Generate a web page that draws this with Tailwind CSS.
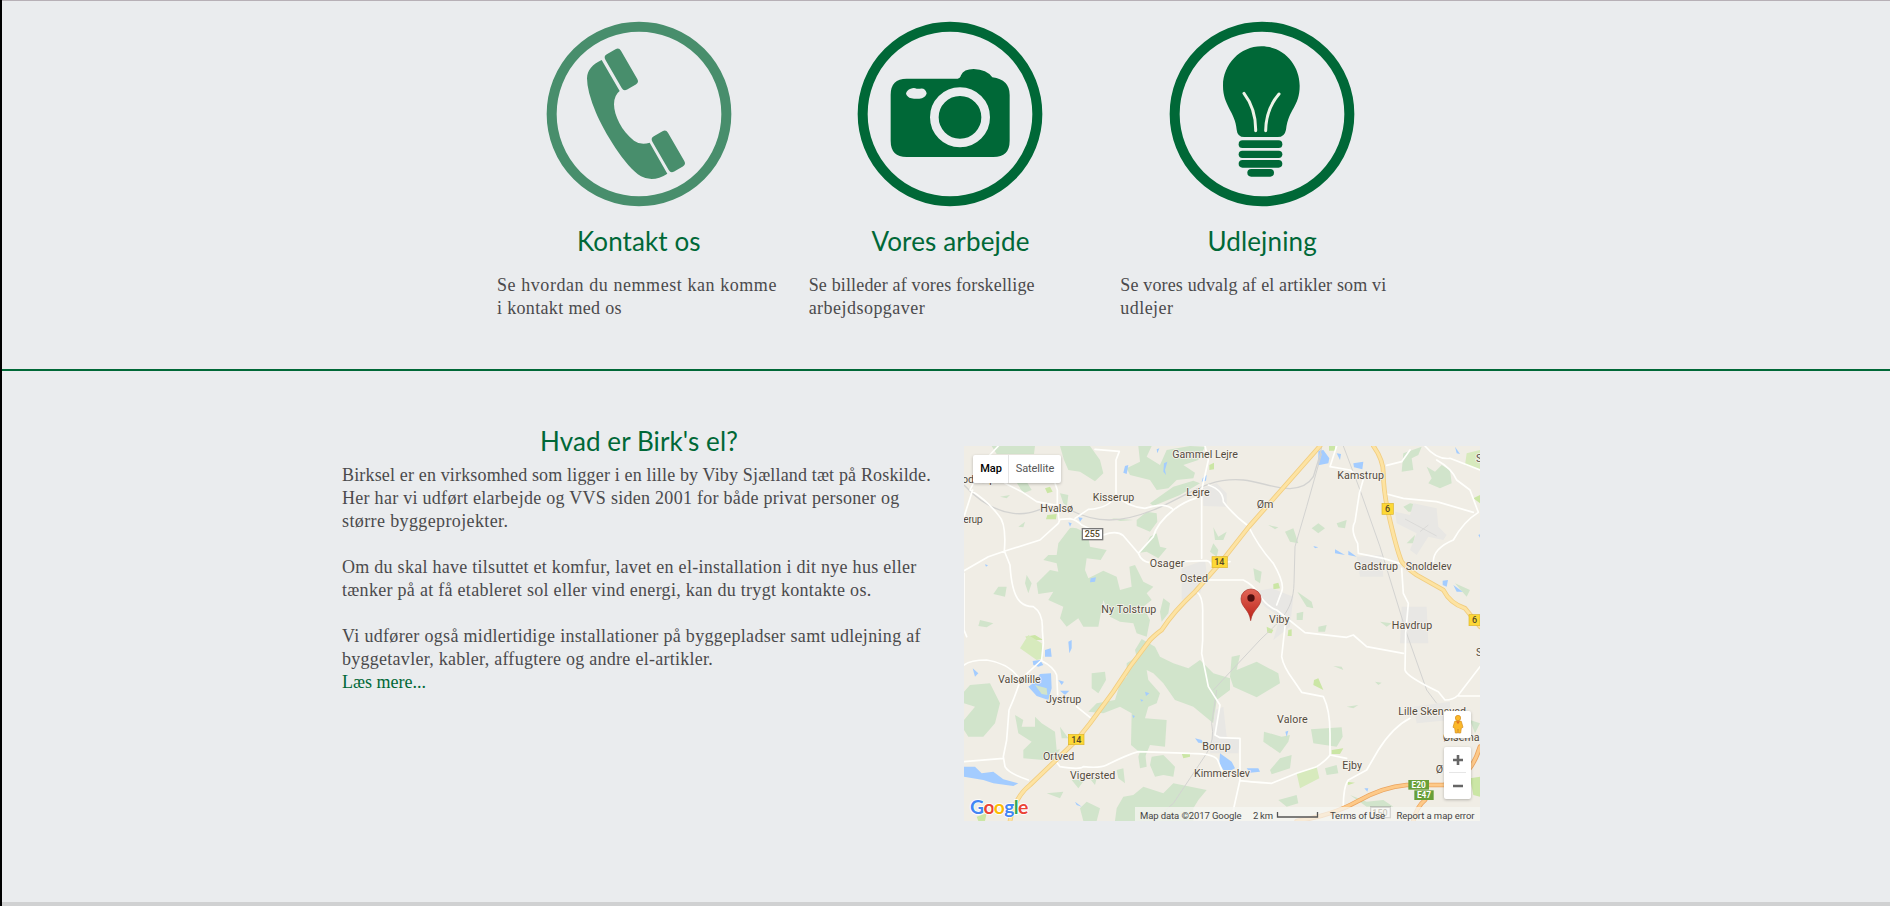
<!DOCTYPE html>
<html lang="da">
<head>
<meta charset="utf-8">
<title>Birk's el</title>
<script src="https://cdn.jsdelivr.net/npm/@tailwindcss/browser@4"></script>
</head>
<body class="h-[906px] overflow-hidden bg-[#eaecee]">
<div class="flex h-[906px] flex-col border-l-2 border-black">
  <section class="h-[371px] shrink-0 border-t border-b-2 border-t-[#b7b0b6] border-b-[#006837]">
    <div class="ml-[481px] grid w-[935px] grid-cols-3 pt-5 font-['Liberation_Serif',serif] text-[18px] leading-[23px] whitespace-nowrap text-[#4a4a4c]">
      <div class="px-[14px]">
        <svg class="mx-auto block" width="186" height="186" viewBox="198 63 558 558" fill="#488e6c">
          <circle cx="477" cy="342" r="262" fill="none" stroke="#488e6c" stroke-width="30"/>
          <path d="M365 180L419 273Q402 286 402 313C402 345 425 395 462 422Q483 437 509 428L562 521Q520 549 483 529C435 499 372 395 348 338Q321 275 321 235C322 210 337 193 365 180Z"/>
          <rect x="-27" y="-61" width="54" height="122" rx="12" transform="translate(424 208) rotate(-30)"/>
          <rect x="-27" y="-61" width="54" height="122" rx="12" transform="translate(565 454) rotate(-30)"/>
        </svg>
        <h2 class="mt-4 text-center font-[Lato,sans-serif] text-[26px] leading-[36px] tracking-[0.1px] text-[#006837]">Kontakt os</h2>
        <p class="mt-[15px]"><span class="tracking-[0.565px]">Se hvordan du nemmest kan komme</span><br><span class="tracking-[0.34px]">i kontakt med os</span></p>
      </div>
      <div class="px-[14px]">
        <svg class="mx-auto block" width="186" height="186" viewBox="171 63 558 558" fill="#006837">
          <circle cx="450" cy="342" r="262" fill="none" stroke="#006837" stroke-width="30"/>
          <path d="M320 236H473Q480 236 483 226Q491 207 521 207Q560 208 577 232Q629 239 629 285V422Q629 471 580 471H320Q272 471 272 422V284Q272 236 320 236Z"/>
          <path d="M318 281Q320 270 332 266Q342 262 350 266H360Q376 263 380 280Q378 290 366 295Q350 298 334 295Q321 291 318 281Z" fill="#eaecee"/>
          <circle cx="480" cy="352" r="77" stroke="#eaecee" stroke-width="26"/>
        </svg>
        <h2 class="mt-4 text-center font-[Lato,sans-serif] text-[26px] leading-[36px] tracking-[0.15px] text-[#006837]">Vores arbejde</h2>
        <p class="mt-[15px]"><span class="tracking-[0.16px]">Se billeder af vores forskellige</span><br><span class="tracking-[0.47px]">arbejdsopgaver</span></p>
      </div>
      <div class="px-[14px]">
        <svg class="mx-auto block" width="186" height="186" viewBox="206 63 558 558" fill="#006837">
          <circle cx="485" cy="342" r="262" fill="none" stroke="#006837" stroke-width="30"/>
          <path d="M483 139C550 139 598 195 598 257C598 320 565 325 557 389Q553 411 532 411H432Q411 411 409 389C405 335 368 318 368 257C368 193 420 139 483 139Z"/>
          <path d="M431 280Q467 327 466 392M536 282Q497 327 496 392" fill="none" stroke="#eef3e8" stroke-width="9" stroke-linecap="round"/>
          <rect x="415" y="421" width="131" height="23" rx="11.500"/><rect x="415" y="452" width="131" height="22" rx="11"/><rect x="415" y="480" width="131" height="23" rx="11.500"/><rect x="441" y="507" width="80" height="23" rx="11.500"/>
        </svg>
        <h2 class="mt-4 text-center font-[Lato,sans-serif] text-[26px] leading-[36px] tracking-[0.15px] text-[#006837]">Udlejning</h2>
        <p class="mt-[15px]"><span class="tracking-[0.15px]">Se vores udvalg af el artikler som vi</span><br><span class="tracking-[0.44px]">udlejer</span></p>
      </div>
    </div>
  </section>
  <section class="flex h-[531px] shrink-0">
    <div class="ml-[340px] w-[594px] pt-[52px] font-['Liberation_Serif',serif] text-[18px] leading-[23px] whitespace-nowrap text-[#4a4a4c]">
      <h2 class="text-center font-[Lato,sans-serif] text-[26px] leading-[36px] tracking-[0.1px] text-[#006837]">Hvad er Birk's el?</h2>
      <p class="mt-[5px]"><span class="tracking-[0.16px]">Birksel er en virksomhed som ligger i en lille by Viby Sjælland tæt på Roskilde.</span><br><span class="tracking-[0.28px]">Her har vi udført elarbejde og VVS siden 2001 for både privat personer og</span><br><span class="tracking-[0.38px]">større byggeprojekter.</span></p>
      <p class="mt-[23px]"><span class="tracking-[0.27px]">Om du skal have tilsuttet et komfur, lavet en el-installation i dit nye hus eller</span><br><span class="tracking-[0.29px]">tænker på at få etableret sol eller vind energi, kan du trygt kontakte os.</span></p>
      <p class="mt-[23px]"><span class="tracking-[0.32px]">Vi udfører også midlertidige installationer på byggepladser samt udlejning af</span><br><span class="tracking-[0.27px]">byggetavler, kabler, affugtere og andre el-artikler.</span><br><a class="text-[#006837]">Læs mere...</a></p>
    </div>
    <div class="relative mt-[75px] ml-[28px] h-[375px] w-[516px] overflow-hidden font-[Roboto,sans-serif]">
      <svg class="block" width="516" height="375" viewBox="12 18 1548 1125">
        <rect x="12" y="18" width="1548" height="1125" fill="#f0ede5"/>
        <!-- forest -->
        <g fill="#d1e4cb">
          <path d="M95 18H225L222 42H110ZM300 18H390L420 60 430 100 405 124 360 95 325 90 312 60ZM535 18L575 18 560 50 600 75 620 30 690 18 735 20 715 60 670 75 705 98 700 115 650 120 625 145 590 150 570 120 510 105 500 85 540 65ZM640 140L700 122 720 130 660 165 580 198 570 190Z"/>
          <path d="M330 264Q355 258 385 290L390 320 440 330 422 360 380 355 375 390 385 415 430 392 470 410 480 450 515 440 508 380 525 375 550 425 580 440 560 460 575 480 550 500 570 540 560 590 530 580 520 550 480 545 450 530 430 480 415 560 370 560 355 535 320 560 300 535 310 500 265 480 280 455 235 462 230 430 270 390 295 395 290 370 250 360 265 345 290 345 295 310Z"/>
          <path d="M530 240L560 215 590 220 592 245 570 275 530 258ZM570 290L590 280 600 320 620 325 595 355 560 335 540 338 560 310ZM610 475L630 490 625 520 605 545 600 515ZM760 262L775 290 800 275 790 300 765 300ZM760 310L775 330 770 350 750 335ZM200 405L215 430 205 460 195 430ZM115 440L140 440 135 470 100 462ZM60 540L100 550 80 562 55 558ZM185 132L200 145 195 155 180 145Z"/>
          <path d="M545 597L585 620 600 650 640 670 685 685 720 660 760 700 810 715 810 750 770 780 760 850 700 800 645 780 610 730 580 700 560 690 565 720 600 760 590 790 565 800 555 835 620 840 615 920 570 915 555 950 513 915 515 820 480 800 430 820 385 815 410 790 465 780 480 730 500 710 500 670 530 650 525 630ZM395 700L435 695 438 720 415 760 395 745Z"/>
          <path d="M30 735L90 730 120 790 105 850 70 890 25 890 12 870 12 840 45 800 12 790 12 755ZM165 825L190 840 185 860 225 860 225 830 245 850 285 875 290 930 250 960 190 955 190 930 215 905 175 880ZM300 860L325 895 305 895ZM265 935L300 928 280 960ZM335 1020L375 1018 355 1045ZM385 1010L410 1015 405 1035ZM470 990L490 985 495 1030 475 1015ZM540 935L555 932 560 980 540 985 535 950ZM575 950L610 945 645 980 640 1010 610 1005 585 1010 570 975Z"/>
          <path d="M550 1040L610 1060 640 1030 740 1050 715 1080 700 1105 700 1143 465 1143 470 1105 490 1070 520 1065ZM360 1105L380 1085 420 1105 410 1143H370ZM260 1060L310 1055 300 1075Z"/>
          <path d="M815 650L840 645 830 690 890 665 955 700 960 730 935 745 890 772 820 740 810 710ZM912 875L965 890 990 885 985 905 960 940 910 905ZM960 955L995 945 990 985 935 1003 930 990ZM1053 868L1145 862 1148 890 1130 920 1060 910ZM1095 985L1130 975 1135 1000 1100 1005ZM955 1080L1010 1065 1015 1090 980 1100ZM1170 1065L1220 1085 1270 1080 1300 1100 1220 1100Z"/>
          <path d="M1330 40L1385 20 1375 45 1355 55 1360 90 1325 95ZM1400 80L1425 95 1445 75 1470 90 1475 130 1440 145 1405 130 1415 115ZM1330 200L1350 190 1375 195 1375 215 1345 215ZM1340 310L1365 285 1360 310ZM975 275L1000 265 1015 310 990 305ZM1055 265L1075 250 1095 265 1075 280ZM1130 250L1160 240 1155 265 1135 262ZM925 255L955 262 945 268ZM1012 455L1055 485 1060 505 1040 500ZM1010 520L1030 515 1028 540 1010 540ZM1075 560L1100 555 1095 575 1075 575ZM880 385L905 395 900 430 885 420ZM1260 545L1295 550 1280 560ZM1485 430L1530 450 1520 470Z"/>
          <path d="M120 170L150 165 140 175ZM175 260L195 245 190 262ZM455 235L520 240 480 243ZM165 120L200 125 215 150 190 160ZM300 160L325 165 320 205 345 215 310 190ZM1530 840L1560 850 1545 880ZM1120 678L1145 680 1150 690ZM1160 800L1195 795 1180 805ZM1245 725L1265 728 1255 735Z"/>
        </g>
        <g fill="#cbe6a5">
          <path d="M255 145L270 140 278 155 262 160ZM262 225L290 222 288 238 258 238ZM748 75L762 68 762 88 748 90ZM195 590L225 585 250 600H210ZM1107 18H1125V32H1107ZM940 432L955 428 960 445 940 448ZM940 480L955 470 985 500 960 495 945 500ZM1540 175L1560 165V190ZM985 570L995 568 995 588 983 588ZM920 560L940 570 935 580 922 578ZM1062 720L1075 715 1090 750 1060 735ZM665 940H690V950L670 955ZM1115 930L1150 925 1140 942 1115 942ZM50 1130L80 1120 75 1143H55ZM1160 1025L1185 1028 1165 1035ZM1530 1015L1560 1010V1070L1540 1065Z"/>
          <path d="M205 585L245 610 250 655 230 660 180 625ZM1010 1000L1070 980 1078 1015 1020 1045ZM1520 40L1560 30V90L1515 75Z" fill="#d7eabd"/>
        </g>
        <!-- built-up areas -->
        <g fill="#e8e7e4">
          <path d="M728 145L770 130 800 160V200L730 198ZM665 385L735 360 740 400 720 460 665 480ZM880 455L935 445 1000 470 990 560 940 600 960 530 915 500ZM1305 215L1350 225 1360 190 1430 205 1435 260 1460 285 1450 300 1405 290 1370 345 1350 330 1370 280 1310 250ZM1190 350L1265 345 1270 410 1200 410ZM1325 500L1400 500 1405 610H1320ZM765 810L790 800 800 890 840 895 835 940 750 940ZM1360 800L1470 785V840L1370 850Z"/>
        </g>
        <!-- lakes -->
        <g fill="#a3ccff">
          <path d="M495 78L505 75 500 102 490 98ZM612 70L622 65 615 90 618 105 610 95ZM590 28L598 25 592 40ZM728 115L740 105 738 122 725 125ZM392 415L408 412 405 425 390 427ZM355 232L368 234 360 245ZM325 247L335 250 330 260ZM75 373L84 376 78 380ZM1075 32L1090 30 1108 55 1105 70 1075 76ZM1130 40L1143 42 1140 60ZM1180 70L1210 65 1207 88 1182 82ZM1125 328L1155 345 1125 340ZM1165 332L1190 350 1165 345ZM1060 318L1075 322 1065 325ZM1448 422L1464 420 1460 440 1448 435ZM1480 435L1508 455 1490 455ZM1555 285L1560 283V293ZM1485 20L1500 42 1490 40Z"/>
          <path d="M218 663L240 660 250 675 235 680 220 675ZM255 630L272 625 275 650 255 650ZM325 605L335 600 335 625 328 640ZM240 702L273 700 275 745 265 780 230 768 205 740 225 725ZM38 685L55 700 45 710ZM295 720L312 725 305 735ZM300 752L328 752 315 765ZM12 980L45 980 65 1000 100 995 130 1018 175 1030 160 1038 100 1030 70 1020 12 1010ZM555 755L568 760 558 768ZM540 778L550 780 545 785ZM517 825L525 828 520 835ZM705 895L725 900 730 910 715 908ZM780 940L815 965 825 985 815 990H790L778 970ZM860 985L895 985 900 995 870 998ZM976 875L985 872 980 890ZM345 1085L365 1100 350 1095ZM1213 1045L1225 1045 1222 1055Z"/>
        </g>
        <path d="M225 735L260 745 262 765 245 762Z" fill="#d1e4cb"/>
        <!-- railways and county lines -->
        <g fill="none" stroke="#d3d3d1" stroke-width="4">
          <path d="M12 135Q80 210 160 220C240 230 260 175 330 210C410 250 480 250 580 210C680 170 740 110 850 120C900 125 940 145 990 146Q1040 143 1060 110L1080 45 1085 18"/>
          <path d="M1085 40L1040 200 1005 320 1002 430C1000 520 950 550 900 600L760 750M1150 18L1200 150 1260 320 1340 580 1400 750 1430 790M770 750L755 850Q765 900 740 940L640 1090 580 1143" stroke-width="3"/>
          <path d="M1335 237L1430 288M1380 275L1405 255" stroke-width="2"/>
        </g>
        <!-- minor roads -->
        <g fill="none" stroke="#fffffc" stroke-width="5" stroke-linejoin="round" stroke-linecap="round">
          <path d="M12 392L85 350 135 333 240 300 295 250 300 238 330 236Q350 240 365 255L430 285Q470 270 490 287L535 340Q545 365 570 368L740 362Q752 365 755 378M115 18L75 60 30 150Q80 180 115 225 140 250 133 333L150 375Q155 460 180 485 195 500 220 500 250 520 247 570L250 610 245 660M38 150L12 230M135 130L185 155 230 185 292 197 297 240M275 100L292 150V200M405 28L478 34 468 60V165Q450 205 385 208L345 235M468 165Q500 200 555 205 620 185 640 210Q670 185 715 172M640 210Q590 250 580 290L537 338M735 18L745 60 735 105 725 150V355M745 420H850Q880 435 895 460 920 500 950 510L1035 578 1160 592 1180 585 1220 620 1330 640M745 135Q790 150 790 185 820 225 865 258Q895 320 940 370 975 430 965 455L950 495M1130 18L1110 80 1170 90L1210 118 1198 160 1185 245Q1170 270 1193 310L1195 340 1270 355 1320 370M1280 76L1325 65 1350 30M1280 162L1330 175 1430 185 1540 217M1395 18Q1430 60 1470 55L1560 90M1430 60Q1475 85 1490 120L1530 150 1555 217Q1510 245 1480 300 1420 325 1420 365M1325 385L1330 460 1345 490 1337 580 1335 690Q1340 710 1435 755L1455 780Q1480 780 1495 765L1560 680M1495 768H1560M12 675Q30 660 80 660 150 670 180 720M245 660L182 718 Q165 770 147 810L140 900 130 950 135 980Q145 1000 205 1020M12 965L130 955M245 662Q280 680 290 705L293 765M350 800L390 832M285 960L300 980Q360 990 370 980 420 985 440 975 500 945 535 935L690 940Q770 940 775 965L795 1015M710 455Q730 470 728 520V600L725 640 745 740 780 795 765 885 780 893 840 895V1020L820 1110M975 560L965 650Q970 680 1000 720L1025 757 1090 770Q1110 810 1110 880V945Q1100 960 1070 980L1010 1000 935 1030Q860 1025 840 1022M1110 945L1160 955M1350 835Q1300 860 1255 930L1220 990 1165 1020Q1150 1040 1150 1100"/>
          <path d="M12 400V570L20 590M755 370L810 365"/>
        </g>
        <!-- trunk roads -->
        <g fill="none" stroke-linejoin="round" stroke-linecap="round">
          <g stroke="#f1cd80" stroke-width="14"><path d="M1080 18L865 262 780 370 705 455Q640 515 605 570 590 580 570 600L510 680 460 755 390 850 350 900Q320 930 210 1035 165 1070 150 1143M1240 18Q1270 60 1270 100 1270 150 1285 220 1310 330 1325 365 1340 385 1370 405L1450 450Q1470 490 1515 505L1560 560"/></g>
          <g stroke="#fde3a2" stroke-width="9"><path d="M1080 18L865 262 780 370 705 455Q640 515 605 570 590 580 570 600L510 680 460 755 390 850 350 900Q320 930 210 1035 165 1070 150 1143M1240 18Q1270 60 1270 100 1270 150 1285 220 1310 330 1325 365 1340 385 1370 405L1450 450Q1470 490 1515 505L1560 560"/></g>
          <path d="M1010 1143Q1120 1125 1190 1085 1270 1040 1340 1035H1450Q1530 1020 1560 920M1360 1143Q1370 1100 1395 1080" stroke="#eaa35e" stroke-width="14"/>
          <path d="M1010 1143Q1120 1125 1190 1085 1270 1040 1340 1035H1450Q1530 1020 1560 920M1360 1143Q1370 1100 1395 1080" stroke="#fdc988" stroke-width="9"/>
        </g>
        <!-- road shields -->
        <g font-size="27" font-weight="500" text-anchor="middle" fill="#54492a">
          <g fill="#fdd835" stroke="#dcb52f" stroke-width="2"><rect x="756" y="350" width="46" height="33"/><rect x="1266" y="190" width="34" height="33"/><rect x="1527" y="524" width="33" height="33"/><rect x="325" y="883" width="47" height="31"/></g>
          <text x="778" y="376">14</text><text x="1283" y="216">6</text><text x="1544" y="550">6</text><text x="349" y="908">14</text>
          <rect x="367" y="266" width="61" height="33" fill="#fff" stroke="#777" stroke-width="4"/><text x="397" y="292">255</text>
          <rect x="1232" y="1102" width="59" height="31" fill="#fff" stroke="#777" stroke-width="4"/><text x="1260" y="1127">150</text>
          <rect x="1345" y="1020" width="62" height="29" fill="#689f38"/><rect x="1363" y="1051" width="58" height="29" fill="#689f38"/>
          <g fill="#fff" font-size="25" font-weight="700"><text x="1376" y="1043">E20</text><text x="1392" y="1075">E47</text></g>
        </g>
        <!-- place names -->
        <g font-size="32" fill="#544b3e" stroke="#f6f3ed" stroke-width="5" stroke-linejoin="round" paint-order="stroke">
          <text x="6" y="130">oderup</text>
          <text x="637" y="54" textLength="197">Gammel Lejre</text>
          <text x="398" y="184" textLength="125">Kisserup</text>
          <text x="241" y="217" textLength="98">Hvalsø</text>
          <text x="10" y="248" textLength="58">erup</text>
          <text x="679" y="167" textLength="70">Lejre</text>
          <text x="569" y="380" textLength="104">Osager</text>
          <text x="660" y="425" textLength="84">Osted</text>
          <text x="424" y="518" textLength="165">Ny Tolstrup</text>
          <text x="1132" y="116" textLength="140">Kamstrup</text>
          <text x="890" y="203" textLength="50">Øm</text>
          <text x="1182" y="389" textLength="132">Gadstrup</text>
          <text x="1337" y="391" textLength="138">Snoldelev</text>
          <text x="927" y="549" textLength="62">Viby</text>
          <text x="1295" y="566" textLength="122">Havdrup</text>
          <text x="1548" y="67">S</text>
          <text x="114" y="729" textLength="128">Valsølille</text>
          <text x="258" y="788" textLength="106">Jystrup</text>
          <text x="249" y="959" textLength="94">Ortved</text>
          <text x="330" y="1016" textLength="136">Vigersted</text>
          <text x="727" y="929" textLength="85">Borup</text>
          <text x="702" y="1010" textLength="168">Kimmerslev</text>
          <text x="951" y="848" textLength="92">Valore</text>
          <text x="1147" y="987" textLength="59">Ejby</text>
          <text x="1315" y="824" textLength="203">Lille Skensved</text>
          <text x="1449" y="903" textLength="110">Ølsema</text>
          <text x="1427" y="998">Ø</text>
          <text x="1548" y="647">S</text>
        </g>
        <!-- marker -->
        <defs><linearGradient id="pin" x2="0" y2="1"><stop stop-color="#e26758"/><stop offset="1" stop-color="#bb2118"/></linearGradient></defs>
        <path d="M872 542C868 508 843 502 843 476A30 29 0 0 1 903 476C903 502 877 508 872 542Z" fill="url(#pin)" stroke="#a93129" stroke-width="2"/>
        <circle cx="873" cy="474" r="11" fill="#4f0f0f"/>
        <text x="30" y="1123" font-family="Lato" font-size="58" font-weight="700" textLength="175" stroke="#fff" stroke-width="5" paint-order="stroke" fill="#4285f4">G<tspan fill="#ea4335">o</tspan><tspan fill="#fbbc05">o</tspan><tspan>g</tspan><tspan fill="#34a853">l</tspan><tspan fill="#ea4335">e</tspan></text>
      </svg>
      <div class="absolute top-[9px] left-[9px] flex h-7 w-[88px] items-center rounded-[2px] bg-white pt-px text-[11px] shadow-[0_1px_3px_rgba(0,0,0,0.25)]">
        <div class="-mt-px flex h-7 w-9 items-center justify-center border-r border-[#e5e5e5] pt-px pl-px font-medium text-black">Map</div>
        <div class="flex-1 text-center tracking-[-0.1px] text-[#565656]">Satellite</div>
      </div>
      <div class="absolute top-[265px] left-[480px] flex h-[27px] w-[27px] items-center justify-center rounded-[2px] bg-white shadow-[0_1px_3px_rgba(0,0,0,0.25)]">
        <svg width="12" height="19" viewBox="0 0 36 57"><circle cx="18" cy="9" r="8" fill="#fbb829" stroke="#d28b1c" stroke-width="2"/><path d="M8 19Q18 14 28 19L33 37 28 39 26 54H19L18 42 17 54H10L8 39 3 37Z" fill="#fbb829" stroke="#d28b1c" stroke-width="2"/><path d="M12 19H24L18 28Z" fill="#e0701c"/></svg>
      </div>
      <div class="absolute top-[301px] left-[480px] h-[52px] w-[27px] rounded-[2px] bg-white shadow-[0_1px_3px_rgba(0,0,0,0.25)]">
        <svg width="27" height="52" viewBox="0 0 27 52"><path d="M9 13H19M14 8V18M9 39H19" stroke="#666" stroke-width="2.600"/><path d="M5 25.500H22" stroke="#e6e6e6"/></svg>
      </div>
      <div class="absolute right-0 bottom-0 h-[14px] w-[345px] bg-[#f5f5f2]/75">
        <svg class="block" width="345" height="14" viewBox="0 0 345 14" font-size="9.500" fill="#444">
          <text x="5" y="12" textLength="101.500">Map data ©2017 Google</text><text x="118" y="12" textLength="20">2 km</text>
          <path d="M142.500 5V10H182.500V5" fill="none" stroke="#555" stroke-width="1.300"/>
          <text x="195" y="12" textLength="55">Terms of Use</text><text x="261.500" y="12" textLength="78">Report a map error</text>
        </svg>
      </div>
    </div>
  </section>
  <div class="h-1 bg-[#d0d1d2]"></div>
</div>
</body>
</html>
